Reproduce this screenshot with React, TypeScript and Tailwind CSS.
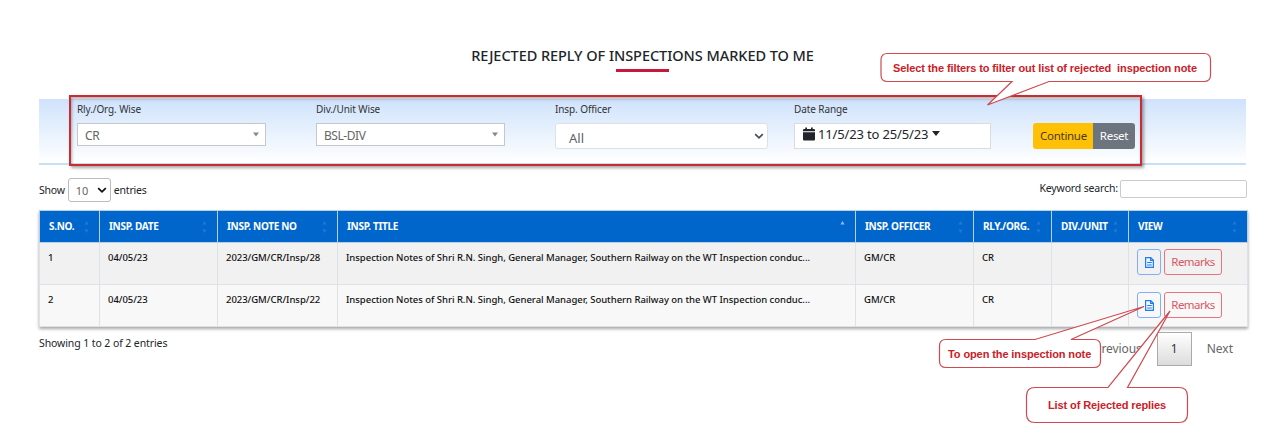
import React from "react";

type Column = { label: string; width: string; ascending?: boolean };

const columns: Column[] = [
  { label: "S.NO.", width: "w-[60px]" },
  { label: "INSP. DATE", width: "w-[118px]" },
  { label: "INSP. NOTE NO", width: "w-[120px]" },
  { label: "INSP. TITLE", width: "w-[518px]", ascending: true },
  { label: "INSP. OFFICER", width: "w-[118px]" },
  { label: "RLY./ORG.", width: "w-[78px]" },
  { label: "DIV./UNIT", width: "w-[77px]" },
  { label: "VIEW", width: "w-[119px]" },
];

const title =
  "Inspection Notes of Shri R.N. Singh, General Manager, Southern Railway on the WT Inspection conduc...";

const rows = [
  ["1", "04/05/23", "2023/GM/CR/Insp/28", title, "GM/CR", "CR", ""],
  ["2", "04/05/23", "2023/GM/CR/Insp/22", title, "GM/CR", "CR", ""],
];

function SortArrows({ ascending }: { ascending?: boolean }) {
  return (
    <svg width="5" height="12" viewBox="0 0 5 12" className="shrink-0">
      <path d="M2.5 0 L4.6 3.4 H0.4 Z" fill={ascending ? "#8fbcf0" : "#1f78d8"} />
      {!ascending && <path d="M2.5 12 L4.6 8.6 H0.4 Z" fill="#1f78d8" />}
    </svg>
  );
}

function Chevron({ color }: { color: string }) {
  return (
    <svg width="10" height="7" viewBox="0 0 10 7" fill="none">
      <path d="M1.2 1.2 L5 4.8 L8.8 1.2" stroke={color} strokeWidth="1.8" />
    </svg>
  );
}

function Combo({ value }: { value: string }) {
  return (
    <div className="flex h-[23px] w-[189px] items-center justify-between border border-[#c4c8cd] bg-white pl-[7px] pr-[6px] text-[12px] tracking-[-0.45px] text-[#666]">
      <span className="pt-[2px]">{value}</span>
      <svg width="6" height="5" viewBox="0 0 6 5">
        <path d="M0 0.5 H6 L3 4.5 Z" fill="#888" />
      </svg>
    </div>
  );
}

function Field({ label, width, children }: { label: string; width: string; children: React.ReactNode }) {
  return (
    <div className={`flex flex-col ${width}`}>
      <div className="h-[23px] text-[10px] leading-[18px] tracking-[-0.1px] text-[#333]">{label}</div>
      {children}
    </div>
  );
}

function FileIcon() {
  return (
    <svg width="9" height="11" viewBox="0 0 9 11" fill="none" stroke="#1a7cff" strokeWidth="1.2">
      <path d="M0.6 0.6 H5.7 L8.4 3.3 V10.4 H0.6 Z" />
      <path d="M5.6 0.6 V3.4 H8.4 M2.2 5.5 H6.8 M2.2 8 H6.8" />
    </svg>
  );
}

export default function App() {
  return (
    <div className="relative h-[437px] w-[1265px] overflow-hidden bg-white pl-[39px] pt-[44px] font-['Noto_Sans','Open_Sans',sans-serif] text-[#212529]">
      <div className="flex h-[55px] w-[1207px] flex-col items-center">
        <h1 className="h-[25px] whitespace-nowrap text-[14.5px] font-medium leading-[23px] tracking-[-0.05px]">
          REJECTED REPLY OF INSPECTIONS MARKED TO ME
        </h1>
        <div className="h-[3px] w-[53px] bg-[#c8193c]" />
      </div>

      <div className="flex h-[66px] w-[1207px] border-b-2 border-[#c3e0f5] bg-linear-to-b from-[#cfe2fc] via-[#e7f1fd] to-white pl-[38px] pt-[1px]">
        <Field label="Rly./Org. Wise" width="w-[239px]">
          <Combo value="CR" />
        </Field>
        <Field label="Div./Unit Wise" width="w-[239px]">
          <Combo value="BSL-DIV" />
        </Field>
        <Field label="Insp. Officer" width="w-[239px]">
          <div className="flex h-[26px] w-[213px] items-center justify-between rounded-[3px] border border-[#dde1e6] bg-white pl-[13px] pr-[3px] text-[13px] text-[#5c6268]">
            <span className="pt-[5px]">All</span>
            <Chevron color="#495057" />
          </div>
        </Field>
        <Field label="Date Range" width="w-[239px]">
          <div className="flex h-[26px] w-[197px] items-start border border-[#d9dde2] bg-white pl-[8px] pt-[3px] text-[13px] leading-[14px]">
            <svg width="12" height="14" viewBox="0 0 12 14" fill="#212529">
              <path d="M2.3 0.4 H4 V2 H8 V0.4 H9.7 V2 H11 Q12 2 12 3 V4.3 H0 V3 Q0 2 1 2 H2.3 Z M0 5.2 H12 V12.4 Q12 13.4 11 13.4 H1 Q0 13.4 0 12.4 Z" />
            </svg>
            <span className="ml-[3px] whitespace-nowrap tracking-[-0.15px]">11/5/23 to 25/5/23</span>
            <svg width="8" height="5" viewBox="0 0 8 5" className="ml-[4px] mt-[4px]">
              <path d="M0 0 H8 L4 5 Z" fill="#212529" />
            </svg>
          </div>
        </Field>
        <div className="flex pt-[23px] text-[11.5px] tracking-[-0.3px]">
          <button className="h-[26px] w-[60px] rounded-l-[3px] bg-[#ffc107] pl-[1px] text-[#4a3b12]">Continue</button>
          <button className="h-[26px] w-[42px] rounded-r-[3px] bg-[#6c757d] text-white">Reset</button>
        </div>
      </div>

      <div className="flex h-[45px] w-[1208px] items-start justify-between text-[10.5px] tracking-[-0.2px]">
        <div className="flex items-center pt-[13px]">
          <span className="pt-[2px]">Show</span>
          <div className="ml-[3px] flex h-[24px] w-[43px] items-center justify-between rounded-[3px] border border-[#bbb] bg-white pl-[7px] pr-[3px] text-[11px] text-[#666]">
            <span className="pt-[2px]">10</span>
            <Chevron color="#111" />
          </div>
          <span className="ml-[3px] pt-[2px]">entries</span>
        </div>
        <div className="flex items-center pt-[15px]">
          <span className="tracking-[-0.15px]">Keyword search:</span>
          <div className="ml-[2px] h-[18px] w-[127px] rounded-[2px] border border-[#ccc] bg-white" />
        </div>
      </div>

      <table className="w-[1208px] table-fixed border-collapse border border-[#dee2e6] shadow-[0_2px_3px_rgba(0,0,0,0.35)]">
        <thead>
          <tr className="h-[32px] bg-[#0066cc] text-white">
            {columns.map((c) => (
              <th key={c.label} className={`border border-[#b9cfe6] p-0 text-left text-[10px] font-bold ${c.width}`}>
                <div className="flex items-center justify-between pl-[9px] pr-[10px]">
                  <span className="whitespace-nowrap tracking-[-0.3px]">{c.label}</span>
                  <SortArrows ascending={c.ascending} />
                </div>
              </th>
            ))}
          </tr>
        </thead>
        <tbody>
          {rows.map((r, i) => (
            <tr key={r[0]} className={i === 0 ? "h-[42px] bg-[#f1f1f1]" : "h-[42px] bg-[#f8f8f8]"}>
              {r.map((cell, j) => (
                <td
                  key={j}
                  className="whitespace-nowrap border border-[#dee2e6] p-0 pl-[8px] pt-[7px] align-top text-[9.5px] font-medium leading-[15px] tracking-[-0.03px] text-[#111]"
                >
                  {cell}
                </td>
              ))}
              <td className={`border border-[#dee2e6] p-0 pl-[8px] align-top ${i === 0 ? "pt-[6px]" : "pt-[7px]"}`}>
                <div className="flex gap-[3px]">
                  <button className="flex h-[26px] w-[24px] items-center justify-center rounded-[3px] border border-[#7eaefc]">
                    <FileIcon />
                  </button>
                  <button className="h-[26px] w-[58px] rounded-[3px] border border-[#e8737f] text-[11.5px] tracking-[-0.55px] text-[#dc5561]">
                    Remarks
                  </button>
                </div>
              </td>
            </tr>
          ))}
        </tbody>
      </table>

      <div className="flex w-[1208px] items-start justify-between">
        <span className="pt-[8px] text-[10.5px] leading-[16px] tracking-[-0.1px]">Showing 1 to 2 of 2 entries</span>
        <div className="flex items-center pt-[5px] text-[12px] text-[#666]">
          <span className="tracking-[-0.1px]">Previous</span>
          <div className="ml-[15px] flex h-[34px] w-[35px] items-center justify-center border border-[#aaa] bg-linear-to-b from-white to-[#dcdcdc] text-[#333]">
            1
          </div>
          <span className="ml-[15px] mr-[14px]">Next</span>
        </div>
      </div>

      <div className="absolute left-[69px] top-[95px] h-[71px] w-[1073px] border-2 border-[#cb2c33] shadow-[2px_2px_3px_rgba(0,0,0,0.35),inset_1px_2px_3px_rgba(0,0,0,0.3)]" />

      <svg className="absolute left-0 top-0" width="1265" height="437" viewBox="0 0 1265 437" fill="white" stroke="#cf4a50">
        <path
          strokeWidth="1.2"
          d="M887.5 53.5 H1204 Q1210.500 53.5 1210.500 60 V75 Q1210.500 81.500 1204 81.500 H1049 L987.500 105 L1012 81.500 H887.5 Q881 81.500 881 75 V60 Q881 53.5 887.5 53.5 Z"
        />
        <path
          strokeWidth="1.2"
          d="M946 339.500 H1035 L1144 306.500 L1071 339.500 H1094 Q1100.500 339.500 1100.500 346 V361 Q1100.500 367.500 1094 367.500 H946 Q939.500 367.500 939.500 361 V346 Q939.500 339.500 946 339.500 Z"
        />
        <path
          strokeWidth="1.2"
          d="M1035 387.500 H1108 L1170 311 L1127.500 387.500 H1179 Q1187.500 387.500 1187.500 396 V414 Q1187.500 422.500 1179 422.500 H1035 Q1026.500 422.500 1026.500 414 V396 Q1026.500 387.500 1035 387.500 Z"
        />
      </svg>
      <div className="absolute left-[893px] top-[60px] whitespace-pre font-['Liberation_Sans',sans-serif] text-[11px] font-bold leading-[16px] tracking-[-0.1px] text-[#cb2027]">
        Select the filters to filter out list of rejected  inspection note
      </div>
      <div className="absolute left-[948px] top-[346px] whitespace-pre font-['Liberation_Sans',sans-serif] text-[11px] font-bold leading-[16px] tracking-[-0.1px] text-[#cb2027]">
        To open the inspection note
      </div>
      <div className="absolute left-[1048px] top-[397px] whitespace-pre font-['Liberation_Sans',sans-serif] text-[11px] font-bold leading-[16px] tracking-[-0.1px] text-[#cb2027]">
        List of Rejected replies
      </div>
    </div>
  );
}
